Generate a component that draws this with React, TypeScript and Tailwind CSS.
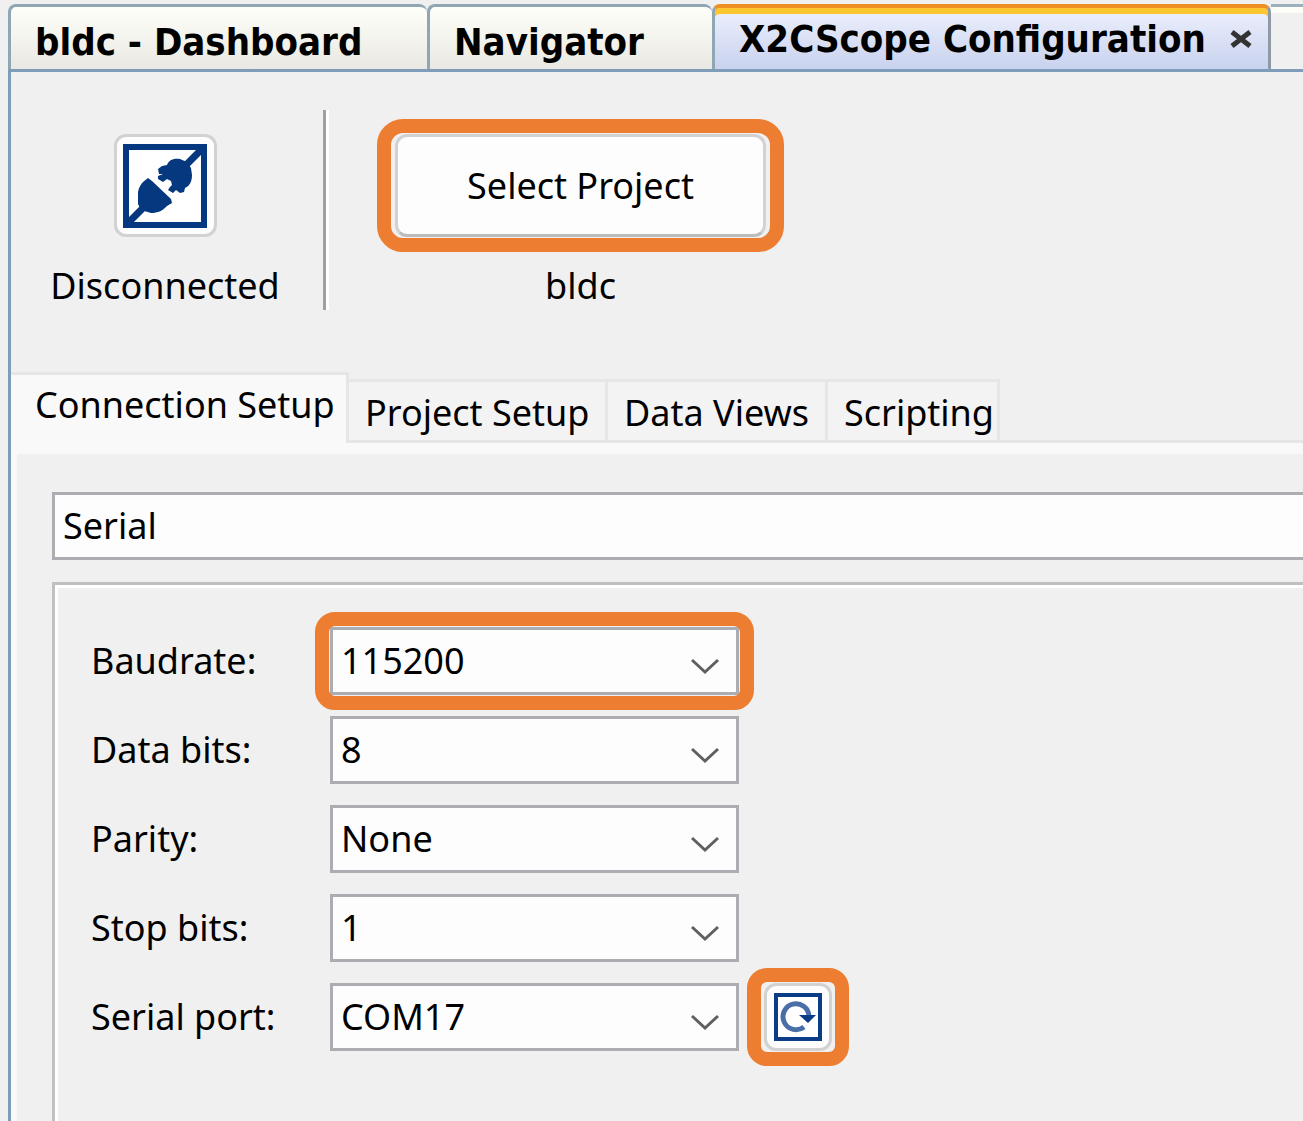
import { useState } from "react";
import type { ReactNode } from "react";

const EDITOR_TABS = [
  { label: "bldc - Dashboard", width: "w-[419px]" },
  { label: "Navigator", width: "w-[285px]" },
];

const SETUP_TABS = [
  { label: "Project Setup", width: "w-[259px]" },
  { label: "Data Views", width: "w-[220px]" },
  { label: "Scripting", width: "w-[172px]" },
];

const FIELDS = [
  { id: "baudrate", label: "Baudrate:", options: ["115200", "57600", "9600"], marked: true },
  { id: "databits", label: "Data bits:", options: ["8", "7"] },
  { id: "parity", label: "Parity:", options: ["None", "Even", "Odd"] },
  { id: "stopbits", label: "Stop bits:", options: ["1", "2"] },
  { id: "port", label: "Serial port:", options: ["COM17", "COM1"], refresh: true },
];

function Marker({ shape }: { shape: string }) {
  return (
    <span
      aria-hidden="true"
      className={`pointer-events-none absolute border-[14px] border-[#ed7d31] ${shape}`}
    />
  );
}

function PlugIcon() {
  return (
    <svg viewBox="0 0 84 84" className="size-[84px]" aria-hidden="true">
      <rect x="3" y="3" width="78" height="78" fill="#fff" stroke="#05387f" strokeWidth="6" />
      <path d="M5 79 L22 62 M62 22 L79 5" stroke="#05387f" strokeWidth="7" />
      <path
        d="M25 34 L29 37 L48 55 L49 59 L44 62 C39 67 35 69 28 69 L18 66 L15 60 L15 48 C16 43 18 40 20 38 Z"
        fill="#05387f"
      />
      <path
        d="M36 30 L35 25 L39 22 L44 21 C46 16 50 14 57 15 L64 18 L68 24 L69 31 C69 37 67 42 62 44 L61 48 L57 49 L53 46 L50 49 L45 46 L47 43 L49 41 L48 37 L44 35 L40 38 L35 35 L35 32 L40 30 Z"
        fill="#05387f"
      />
    </svg>
  );
}

function RefreshIcon() {
  return (
    <svg viewBox="0 0 48 48" className="size-[48px]" aria-hidden="true">
      <rect x="2" y="2" width="44" height="44" fill="#fff" stroke="#0b3d87" strokeWidth="4" />
      <path d="M30 34 A13 13 0 1 1 35 23" fill="none" stroke="#4a6fa8" strokeWidth="5" />
      <path d="M25 22 H42 L34 30 Z" fill="#0b3d87" />
    </svg>
  );
}

function Chevron() {
  return (
    <svg
      viewBox="0 0 30 18"
      className="pointer-events-none absolute right-[19px] top-[30px] h-[18px] w-[30px]"
      aria-hidden="true"
    >
      <path d="M2 3 L15 15 L28 3" fill="none" stroke="#606060" strokeWidth="3" />
    </svg>
  );
}

type ComboProps = {
  id: string;
  options: string[];
  label?: string;
  wide?: boolean;
  children?: ReactNode;
};

function Combo({ id, options, label, wide, children }: ComboProps) {
  return (
    <div className="relative">
      <select
        id={id}
        aria-label={label}
        className={`block h-[68px] w-full appearance-none border-[3px] border-[#abadb3] bg-[#fdfdfd] pl-2 outline-none ${wide ? "border-r-0" : ""}`}
      >
        {options.map((o) => (
          <option key={o}>{o}</option>
        ))}
      </select>
      {children}
    </div>
  );
}

export default function App() {
  const [connected, setConnected] = useState(false);
  return (
    <div className="min-h-screen overflow-hidden bg-[#f0f0f0] pt-1 pl-2 font-['Noto_Sans',sans-serif] text-[36px] leading-[48px] text-black">
      <div
        role="tablist"
        className="flex h-[68px] border-b-[3px] border-[#7f9db9] font-['DejaVu_Sans_Condensed','DejaVu_Sans',sans-serif] text-[38px] font-bold"
      >
        {EDITOR_TABS.map((t) => (
          <button
            key={t.label}
            role="tab"
            className={`${t.width} shrink-0 rounded-t-lg border-[3px] border-r-0 border-b-0 border-[#8fa6b5] bg-linear-to-b from-[#fffffa] to-[#e9e8e2] pt-2 pl-6 text-left whitespace-nowrap`}
          >
            {t.label}
          </button>
        ))}
        <div className="flex w-[559px] shrink-0 items-center justify-between rounded-t-lg border-t-[4px] border-r-[3px] border-l-[3px] border-t-[#ee8f23] border-r-[#8e9aa5] border-l-[#8fa6b5] bg-linear-to-b from-[#edf1fd] to-[#c9d2ee] pr-4 pl-6 shadow-[inset_0_6px_0_#ffc72f]">
          <button role="tab" aria-selected="true" className="whitespace-nowrap">
            X2CScope Configuration
          </button>
          <button aria-label="Close tab">
            <svg viewBox="0 0 22 20" className="h-5 w-[22px]" aria-hidden="true">
              <path d="M2 3 L20 17 M20 3 L2 17" stroke="#333" strokeWidth="5" />
            </svg>
          </button>
        </div>
        <div className="grow border-t-[3px] border-[#9db0bd] shadow-[inset_0_6px_0_#fdfdf8]" />
      </div>

      <main className="min-h-[1049px] border-l-[3px] border-[#7f9db9]">
        <div className="flex pt-[38px]">
          <div className="mr-1 flex w-[308px] shrink-0 flex-col items-center pt-[24px]">
            <button
              onClick={() => setConnected(!connected)}
              aria-label="Toggle connection"
              className="flex size-[103px] items-center justify-center rounded-xl border-[3px] border-[#d2d2d2] bg-[#fdfdfd]"
            >
              <PlugIcon />
            </button>
            <span className="mt-[25px]">{connected ? "Connected" : "Disconnected"}</span>
          </div>
          <div className="h-[200px] w-[6px] border-r-[3px] border-l-[3px] border-r-white border-l-[#a0a0a0]" />
          <div className="ml-[66px] flex w-[371px] shrink-0 flex-col items-center pt-[24px]">
            <div className="relative w-full">
              <button className="block h-[103px] w-full rounded-xl border-[3px] border-[#d2d2d2] border-b-[#bcbcbc] bg-[#fdfdfd]">
                Select Project
              </button>
              <Marker shape="-inset-x-[18px] -inset-y-[15px] rounded-[26px]" />
            </div>
            <span className="mt-[25px]">bldc</span>
          </div>
        </div>

        <div role="tablist" className="mt-[62px] flex items-end border-b-[3px] border-[#e6e6e6]">
          <button
            role="tab"
            aria-selected="true"
            className="-mb-[3px] h-[71px] w-[338px] shrink-0 border-t-[3px] border-r-[3px] border-[#e6e6e6] bg-[#f9f9f9] pb-2 pl-6 text-left whitespace-nowrap"
          >
            Connection Setup
          </button>
          {SETUP_TABS.map((t) => (
            <button
              key={t.label}
              role="tab"
              className={`${t.width} h-[61px] shrink-0 border-t-[3px] border-r-[3px] border-[#e6e6e6] bg-[#f3f3f3] pt-1 pl-4 text-left whitespace-nowrap`}
            >
              {t.label}
            </button>
          ))}
        </div>

        <section className="border-t-[11px] border-l-[6px] border-[#f9f9f9] pt-[38px] pl-[35px]">
          <Combo id="interface" label="Interface" options={["Serial", "TCP/IP"]} wide />
          <div className="mt-[22px] border-t-[3px] border-l-[3px] border-[#c0c0c0]">
            <div className="flex min-h-[537px] flex-col gap-[21px] border-t-[3px] border-l-[3px] border-white pt-[39px] pl-[33px]">
              {FIELDS.map((f) => (
                <div key={f.id} className="flex items-center">
                  <label htmlFor={f.id} className="w-[239px] shrink-0 whitespace-nowrap">
                    {f.label}
                  </label>
                  <div className="w-[409px] shrink-0">
                    <Combo id={f.id} options={f.options}>
                      <Chevron />
                      {f.marked && <Marker shape="-inset-[15px] rounded-[20px]" />}
                    </Combo>
                  </div>
                  {f.refresh && (
                    <div className="relative ml-[25px]">
                      <button
                        aria-label="Refresh ports"
                        className="flex size-[68px] items-center justify-center rounded-xl border-[3px] border-[#d2d2d2] bg-[#fdfdfd]"
                      >
                        <RefreshIcon />
                      </button>
                      <Marker shape="-inset-x-[17px] -inset-y-[15px] rounded-[20px]" />
                    </div>
                  )}
                </div>
              ))}
            </div>
          </div>
        </section>
      </main>
    </div>
  );
}
